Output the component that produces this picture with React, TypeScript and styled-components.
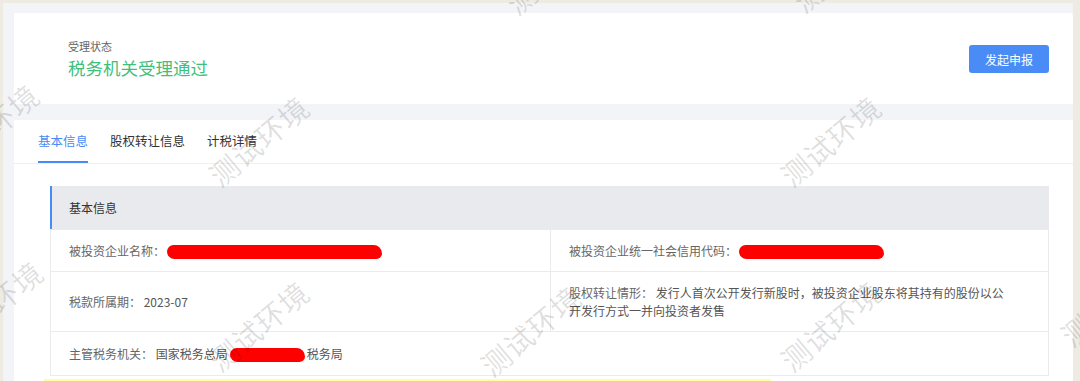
import React from "react";
import styled, { createGlobalStyle } from "styled-components";

const GlobalStyle = createGlobalStyle`
  html, body { margin: 0; padding: 0; }
  body {
    background: #eeebe3;
    font-family: "Noto Sans CJK SC", "Noto Sans", sans-serif;
    overflow: hidden;
  }
`;

const Frame = styled.div`
  position: relative;
  width: 1080px;
  height: 381px;
  box-sizing: border-box;
  padding: 3px 7px 0 3px;
  overflow: hidden;
`;

const Page = styled.div`
  background: #f3f4f8;
  height: 100%;
  box-sizing: border-box;
  padding: 10px 0 0 11px;
  display: flex;
  flex-direction: column;
`;

const HeaderCard = styled.div`
  background: #fff;
  height: 91px;
  flex: none;
  border-radius: 0 4px 0 0;
  display: flex;
  align-items: center;
  justify-content: space-between;
  padding: 0 24px 0 54px;
  box-sizing: border-box;
`;

const StatusBlock = styled.div`
  display: flex;
  flex-direction: column;
  gap: 2px;
`;

const StatusLabel = styled.div`
  font-size: 11px;
  line-height: 16px;
  color: #666;
`;

const StatusValue = styled.div`
  font-size: 17.5px;
  line-height: 24px;
  color: #3fbf7c;
`;

const PrimaryButton = styled.button`
  width: 80px;
  height: 28px;
  border: none;
  border-radius: 3px;
  background: #4a8cf6;
  color: #fff;
  font-family: inherit;
  font-size: 12px;
  padding: 0;
  margin-top: 1px;
`;

const ContentCard = styled.div`
  background: #fff;
  margin-top: 16px;
  flex: 1;
  display: flex;
  flex-direction: column;
`;

const TabBar = styled.div`
  display: flex;
  gap: 22px;
  padding-left: 24px;
  border-bottom: 1px solid #eef0f3;
  height: 43px;
  box-sizing: content-box;
`;

const Tab = styled.div<{ $active?: boolean }>`
  font-size: 12.5px;
  line-height: 43px;
  height: 43px;
  box-sizing: border-box;
  color: ${(p) => (p.$active ? "#4a8af4" : "#333")};
  border-bottom: 2px solid ${(p) => (p.$active ? "#4a8af4" : "transparent")};
  padding-bottom: 2px;
  line-height: 41px;
`;

const Panel = styled.div`
  margin: 22px 24px 0 36px;
  border: 1px solid #ebebeb;
  border-top: none;
  border-left: none;
`;

const PanelHeader = styled.div`
  height: 43px;
  background: #e9eaee;
  border-left: 2px solid #4a8af4;
  padding-left: 17px;
  display: flex;
  align-items: center;
  font-size: 12px;
  color: #333;
`;

const Row = styled.div<{ $h: number }>`
  display: grid;
  grid-template-columns: 500px 1fr;
  min-height: ${(p) => p.$h}px;
  border-top: 1px solid #ebebeb;
  border-left: 1px solid #ebebeb;
  box-sizing: border-box;
`;

const FullRow = styled(Row)`
  grid-template-columns: 1fr;
`;

const Cell = styled.div<{ $divider?: boolean }>`
  display: flex;
  align-items: center;
  padding: 0 40px 0 18px;
  font-size: 12px;
  line-height: 18px;
  color: #666;
  border-right: ${(p) => (p.$divider ? "1px solid #ebebeb" : "none")};
`;

const CellText = styled.div`
  white-space: normal;
`;

const Value = styled.span`
  color: #555;
`;

const Redact = styled.span<{ $w: number }>`
  display: inline-block;
  vertical-align: middle;
  width: ${(p) => p.$w}px;
  height: 14px;
  background: #ff0000;
  border-radius: 7px 9px 6px 8px;
  margin: 0 2px;
`;

const Highlight = styled.div`
  margin: 3px 0 0 30px;
  width: 727px;
  height: 20px;
  background: #ffff9e;
`;

const WatermarkLayer = styled.div`
  position: absolute;
  inset: 0;
  pointer-events: none;
  overflow: hidden;
`;

const Mark = styled.span`
  position: absolute;
  transform: translate(-50%, -50%) rotate(-40deg);
  font-size: 29px;
  color: rgba(0, 0, 0, 0.13);
  white-space: nowrap;
  letter-spacing: 1px;
`;

const marks = [
  [258, 140],
  [830, 140],
  [-12, 128],
  [258, 325],
  [530, 330],
  [830, 325],
  [-8, 305],
  [1110, 300],
  [555, -32],
  [842, -34],
];

export default function App() {
  return (
    <>
      <GlobalStyle />
      <Frame>
        <Page>
          <HeaderCard>
            <StatusBlock>
              <StatusLabel>受理状态</StatusLabel>
              <StatusValue>税务机关受理通过</StatusValue>
            </StatusBlock>
            <PrimaryButton>发起申报</PrimaryButton>
          </HeaderCard>
          <ContentCard>
            <TabBar>
              <Tab $active>基本信息</Tab>
              <Tab>股权转让信息</Tab>
              <Tab>计税详情</Tab>
            </TabBar>
            <Panel>
              <PanelHeader>基本信息</PanelHeader>
              <Row $h={42}>
                <Cell $divider>
                  <CellText>
                    被投资企业名称：
                    <Redact $w={215} />
                  </CellText>
                </Cell>
                <Cell>
                  <CellText>
                    被投资企业统一社会信用代码：
                    <Redact $w={145} />
                  </CellText>
                </Cell>
              </Row>
              <Row $h={60}>
                <Cell $divider>
                  <CellText>
                    税款所属期： <Value>2023-07</Value>
                  </CellText>
                </Cell>
                <Cell>
                  <CellText>
                    股权转让情形：
                    <Value>
                      {" "}
                      发行人首次公开发行新股时，被投资企业股东将其持有的股份以公开发行方式一并向投资者发售
                    </Value>
                  </CellText>
                </Cell>
              </Row>
              <FullRow $h={44}>
                <Cell>
                  <CellText>
                    主管税务机关：{" "}
                    <Value>
                      国家税务总局
                      <Redact $w={75} />
                      税务局
                    </Value>
                  </CellText>
                </Cell>
              </FullRow>
            </Panel>
            <Highlight />
          </ContentCard>
        </Page>
        <WatermarkLayer>
          {marks.map(([x, y], i) => (
            <Mark key={i} style={{ left: x, top: y }}>
              测试环境
            </Mark>
          ))}
        </WatermarkLayer>
      </Frame>
    </>
  );
}
